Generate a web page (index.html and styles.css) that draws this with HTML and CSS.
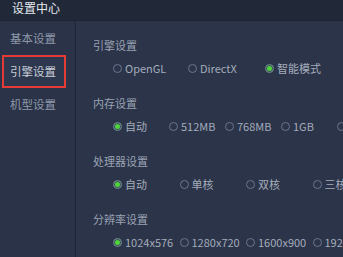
FILE: index.html
```html
<!DOCTYPE html>
<html lang="zh-CN">
<head>
  <meta charset="UTF-8" />
  <title>设置中心</title>
  <link rel="stylesheet" href="styles.css">
</head>
<body>
  <div class="window">
    <div class="titlebar">设置中心</div>
    <div class="main">
      <div class="sidebar">
        <div class="nav-item">基本设置</div>
        <div class="nav-item active">引擎设置</div>
        <div class="nav-item">机型设置</div>
      </div>
      <div class="content">
        <div class="section">
          <div class="section-title">引擎设置</div>
          <div class="options engine">
            <label class="option"><span class="radio"></span>OpenGL</label>
            <label class="option"><span class="radio"></span>DirectX</label>
            <label class="option"><span class="radio checked"></span>智能模式</label>
          </div>
        </div>
        <div class="section">
          <div class="section-title">内存设置</div>
          <div class="options memory">
            <label class="option"><span class="radio checked"></span>自动</label>
            <label class="option"><span class="radio"></span>512MB</label>
            <label class="option"><span class="radio"></span>768MB</label>
            <label class="option"><span class="radio"></span>1GB</label>
            <label class="option"><span class="radio"></span>2GB</label>
          </div>
        </div>
        <div class="section">
          <div class="section-title">处理器设置</div>
          <div class="options wide">
            <label class="option"><span class="radio checked"></span>自动</label>
            <label class="option"><span class="radio"></span>单核</label>
            <label class="option"><span class="radio"></span>双核</label>
            <label class="option"><span class="radio"></span>三核</label>
          </div>
        </div>
        <div class="section">
          <div class="section-title">分辨率设置</div>
          <div class="options wide">
            <label class="option"><span class="radio checked"></span>1024x576</label>
            <label class="option"><span class="radio"></span>1280x720</label>
            <label class="option"><span class="radio"></span>1600x900</label>
            <label class="option"><span class="radio"></span>1920x1080</label>
          </div>
        </div>
      </div>
    </div>
  </div>
</body>
</html>
```

FILE: styles.css
```css
body {
  margin: 0;
  padding: 0;
  font-family: "Noto Sans CJK SC", "Noto Sans", sans-serif;
  background: #2b3449;
  overflow: hidden;
}
.window {
  width: 343px;
  height: 257px;
  display: flex;
  flex-direction: column;
}
.titlebar {
  height: 21px;
  line-height: 16px;
  padding-left: 12px;
  font-size: 12px;
  color: #e6e9ef;
  background: #212939;
  border-bottom: 1px solid #1c2331;
  box-sizing: border-box;
}
.main {
  flex: 1;
  display: flex;
  overflow: hidden;
}
.sidebar {
  width: 75px;
  flex-shrink: 0;
  background: #2a3347;
  border-right: 1px solid #1e2534;
  padding-top: 1px;
}
.nav-item {
  width: 64px;
  height: 33px;
  line-height: 29px;
  margin-left: 2px;
  padding-left: 6px;
  box-sizing: border-box;
  border: 2px solid transparent;
  font-size: 11.5px;
  color: #8f98aa;
}
.nav-item.active {
  border-color: #e53a36;
  color: #c9ced8;
  background: #2d374d;
}
.content {
  flex: 1;
  padding: 16px 0 0 17px;
  white-space: nowrap;
}
.section {
  height: 58px;
}
.section-title {
  height: 16px;
  line-height: 16px;
  font-size: 11px;
  color: #9aa2b2;
}
.options {
  display: flex;
  margin-top: 7px;
  padding-left: 20px;
}
.option {
  display: flex;
  align-items: center;
  flex-shrink: 0;
  height: 16px;
  font-size: 11px;
  color: #a4acbb;
}
.engine .option { width: 75px; }
.engine .option:nth-child(2) { width: 77px; }
.memory .option { width: 56px; }
.wide .option { width: 66.5px; }
.radio {
  width: 7px;
  height: 7px;
  border: 1px solid #6b7590;
  border-radius: 50%;
  margin-right: 3px;
  flex-shrink: 0;
  box-sizing: content-box;
}
.radio.checked {
  background: #4fd43a;
  box-shadow: inset 0 0 0 1px #3f4a60;
}
```
